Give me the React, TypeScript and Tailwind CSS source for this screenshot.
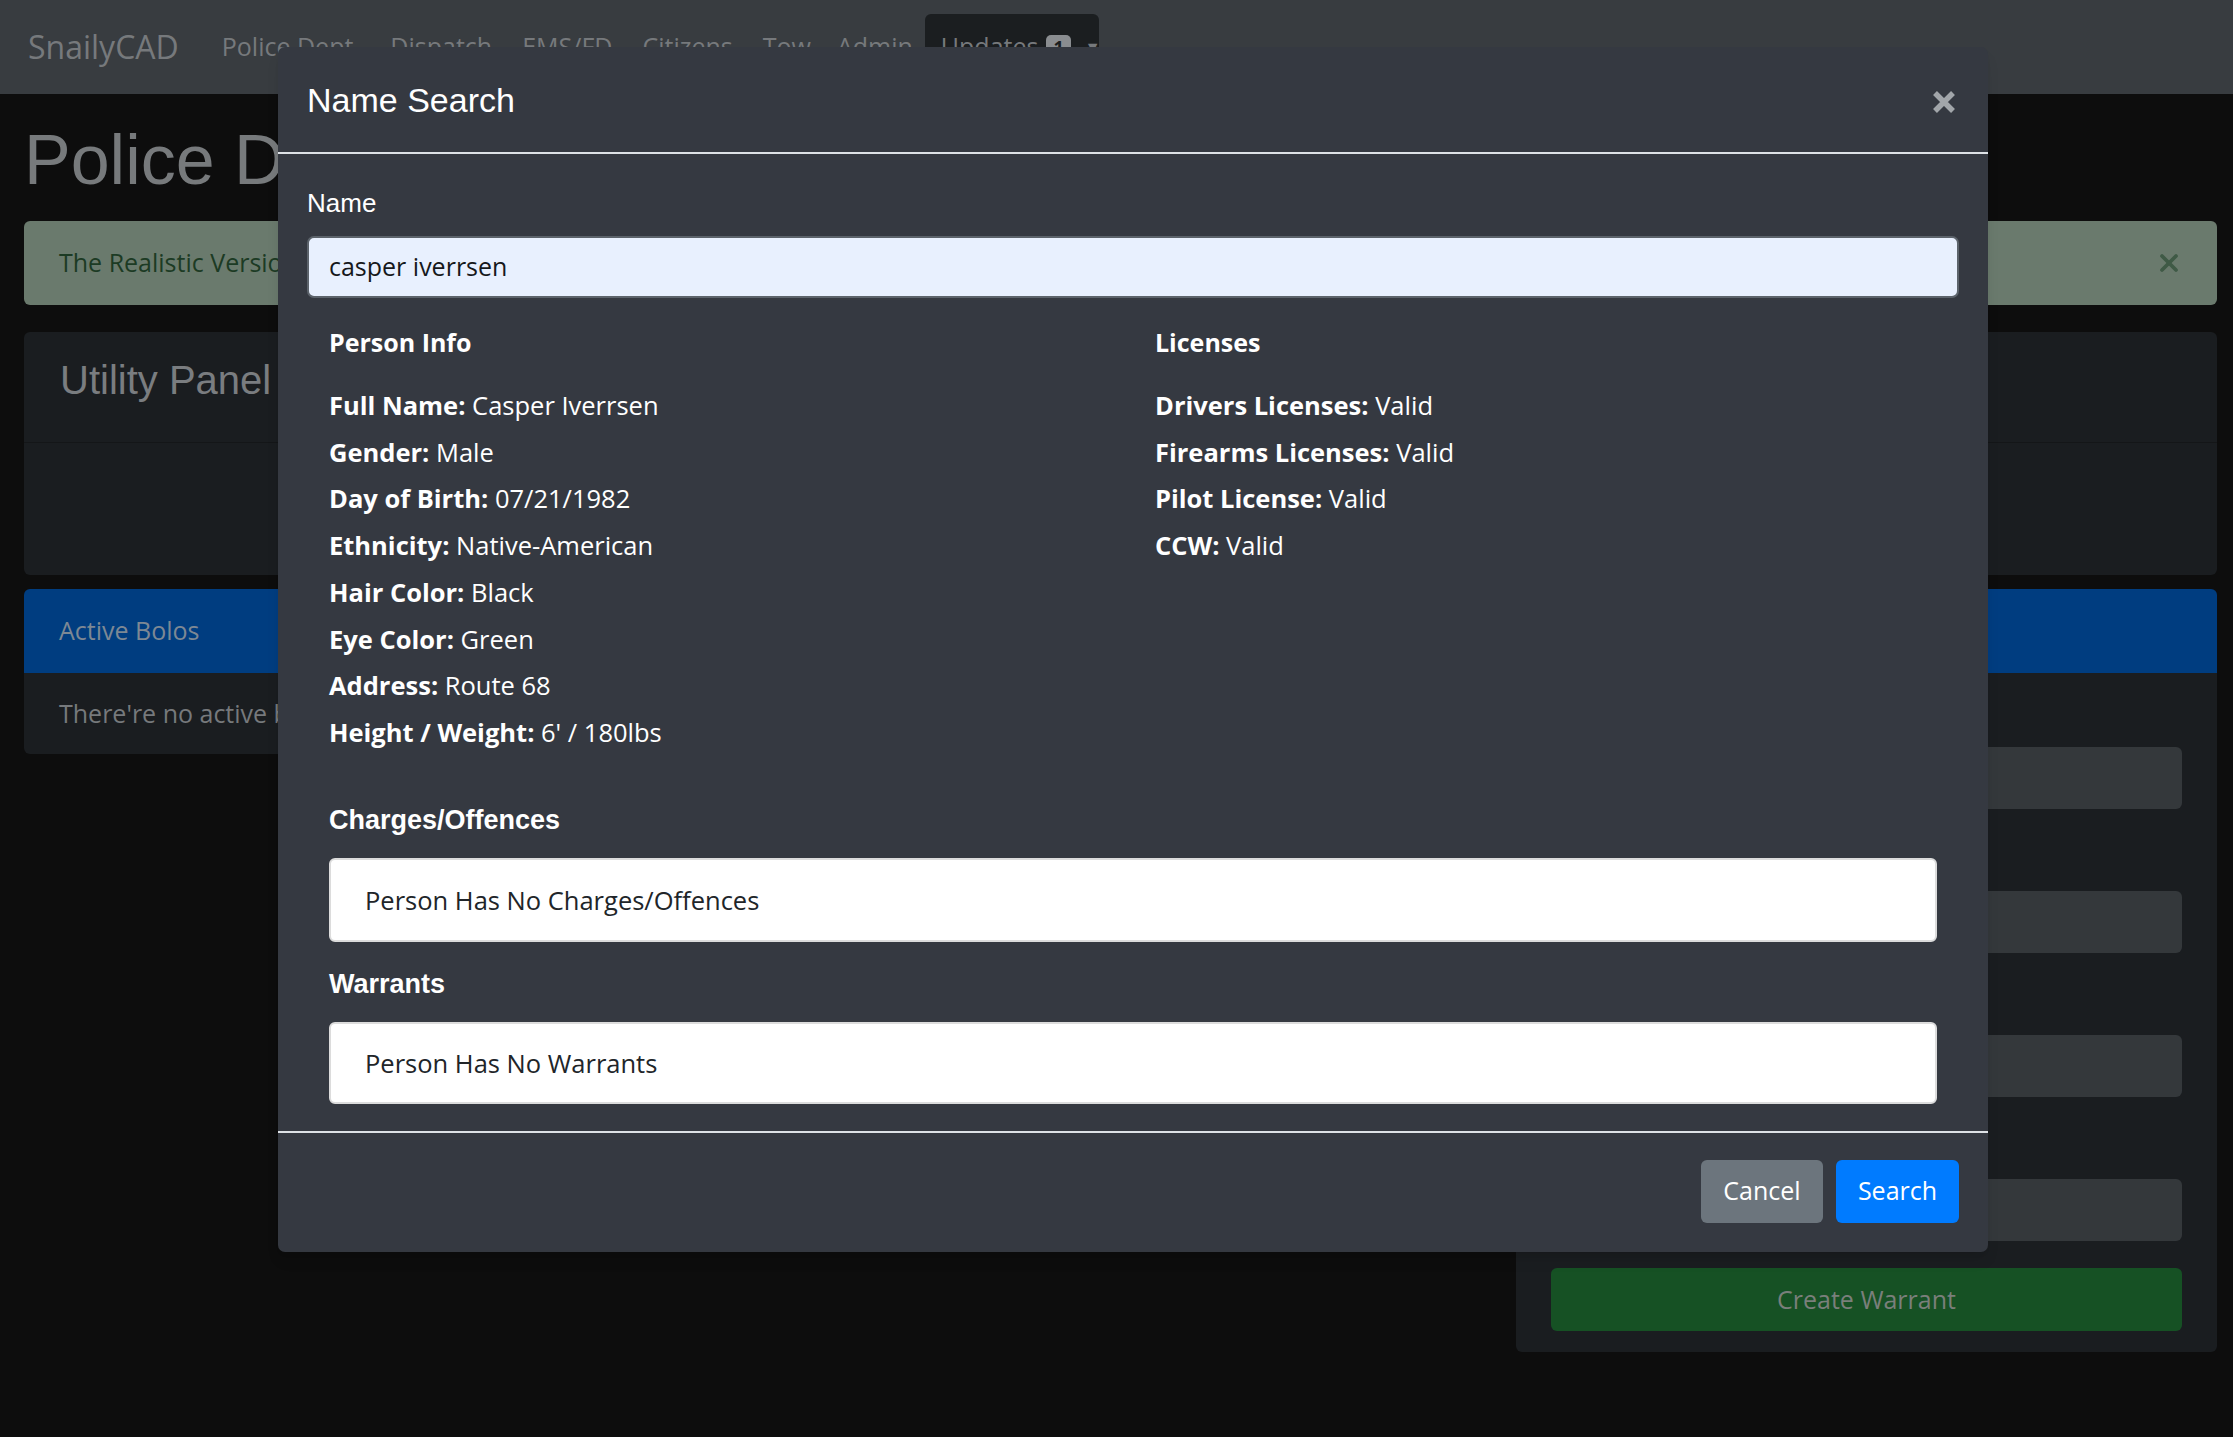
import { X } from "lucide-react";

const personInfo: [string, string][] = [
  ["Full Name", "Casper Iverrsen"],
  ["Gender", "Male"],
  ["Day of Birth", "07/21/1982"],
  ["Ethnicity", "Native-American"],
  ["Hair Color", "Black"],
  ["Eye Color", "Green"],
  ["Address", "Route 68"],
  ["Height / Weight", "6' / 180lbs"],
];

const licenses: [string, string][] = [
  ["Drivers Licenses", "Valid"],
  ["Firearms Licenses", "Valid"],
  ["Pilot License", "Valid"],
  ["CCW", "Valid"],
];

function InfoRow({ label, value }: { label: string; value: string }) {
  return (
    <p className="leading-[46.7px] text-[25.5px] text-white">
      <strong className="font-bold">{label}:</strong> {value}
    </p>
  );
}

export default function App() {
  return (
    <div className="relative min-h-screen bg-[#0d0d0d] font-['Open_Sans','Noto_Sans',sans-serif] overflow-hidden">
      {/* Navbar (dimmed by backdrop) */}
      <nav className="h-[94px] bg-[#383c40] flex items-center pl-[28px] text-[#76797c]">
        <span className="text-[32px] mr-[43px]">SnailyCAD</span>
        <div className="flex items-center gap-[30px] text-[25px]">
          <span className="mr-[7px]">Police Dept</span>
          <span>Dispatch</span>
          <span>EMS/FD</span>
          <span>Citizens</span>
          <span className="mr-[-4px]">Tow</span>
          <span>Admin</span>
        </div>
        <div className="ml-[12px] self-stretch mt-[14px] w-[174px] rounded-t-[6px] bg-[#1b1e20] flex items-center pl-[16px] pb-[14px] gap-[8px] text-[25px]">
          <span>Updates</span>
          <span className="bg-[#8a8d90] text-[#1b1e20] text-[18px] font-bold rounded-[5px] px-[7px] leading-[24px]">1</span>
          <span className="text-[16px] ml-[6px]">▼</span>
        </div>
      </nav>

      {/* Page body */}
      <main className="pl-[24px] pr-[16px] pb-[60px]">
        <h1 className="mt-[24px] mb-[19px] font-['Liberation_Sans',Arial,sans-serif] text-[70px] leading-[84px] text-[#777a7c]">
          Police Department
        </h1>

        <div className="h-[84px] rounded-[6px] bg-[#6a7a6d] flex items-center justify-between pl-[35px] pr-[34px]">
          <span className="text-[25px] text-[#1c3b24]">The Realistic Version of a CAD.</span>
          <X className="w-[28px] h-[28px] text-[#3f5a46]" strokeWidth={3.2} />
        </div>

        <div className="mt-[27px] rounded-[6px] bg-[#1a1d20]">
          <div className="h-[111px] flex items-center pl-[36px] pb-[14px] border-b border-[#141618]">
            <h2 className="font-['Liberation_Sans',Arial,sans-serif] text-[40px] text-[#7a7d80]">Utility Panel</h2>
          </div>
          <div className="h-[132px]" />
        </div>

        <div className="mt-[14px]">
          <div className="h-[84px] rounded-t-[6px] bg-[#003d80] flex items-center pl-[35px]">
            <span className="text-[25px] text-[#7d8894]">Active Bolos</span>
          </div>
          <div className="flex items-start">
            <div className="flex-1 h-[81px] bg-[#1a1d20] rounded-bl-[6px] flex items-center pl-[35px]">
              <span className="text-[25px] text-[#76797c]">There're no active bolos</span>
            </div>
            <div className="w-[701px] bg-[#1a1d20] rounded-b-[6px] pt-[74px] px-[35px] pb-[21px] flex flex-col">
              <div className="flex flex-col gap-[82px]">
                <div className="h-[62px] rounded-[6px] bg-[#34383b]" />
                <div className="h-[62px] rounded-[6px] bg-[#34383b]" />
                <div className="h-[62px] rounded-[6px] bg-[#34383b]" />
                <div className="h-[62px] rounded-[6px] bg-[#34383b]" />
              </div>
              <button className="mt-[27px] h-[63px] rounded-[6px] bg-[#165124] text-[25px] text-[#7a7f7b]">
                Create Warrant
              </button>
            </div>
          </div>
        </div>
      </main>

      {/* Name Search modal */}
      <div className="absolute top-[47px] left-[278px] w-[1710px] rounded-[7px] bg-[#353941] shadow-lg">
        <div className="h-[107px] flex items-center justify-between pl-[29px] pr-[33px] border-b-2 border-[#dee2e6]">
          <h5 className="mt-[2px] font-['Liberation_Sans',Arial,sans-serif] text-[34px] text-white">Name Search</h5>
          <svg width="22" height="22" viewBox="0 0 22 22" className="mt-[4px]">
            <path d="M2 2 L20 20 M20 2 L2 20" stroke="#a2a6aa" strokeWidth="5.5" />
          </svg>
        </div>

        <div className="px-[29px] pt-[31px] pb-[27px]">
          <label className="block font-['Liberation_Sans',Arial,sans-serif] text-[26px] leading-[36px] text-white mb-[15px]">
            Name
          </label>
          <div className="h-[62px] rounded-[7px] border-2 border-[#5c636b] bg-[#e8f0fe] flex items-center pl-[20px] text-[25px] text-[#16181b]">
            casper iverrsen
          </div>

          <div className="grid grid-cols-2 mt-[26px]">
            <div className="px-[22px]">
              <h5 className="text-[25px] font-bold leading-[36px] text-white mb-[22px]">Person Info</h5>
              {personInfo.map(([l, v]) => (
                <InfoRow key={l} label={l} value={v} />
              ))}
            </div>
            <div className="px-[22px]">
              <h5 className="text-[25px] font-bold leading-[36px] text-white mb-[22px]">Licenses</h5>
              {licenses.map(([l, v]) => (
                <InfoRow key={l} label={l} value={v} />
              ))}
            </div>
          </div>

          <div className="px-[22px] mt-[46px]">
            <h5 className="font-['Liberation_Sans',Arial,sans-serif] font-bold text-[27px] leading-[36px] text-white mb-[20px]">
              Charges/Offences
            </h5>
            <div className="h-[84px] rounded-[6px] border-2 border-[#dcdcdc] bg-white flex items-center pl-[34px] text-[25.5px] text-[#212529]">
              Person Has No Charges/Offences
            </div>
            <h5 className="mt-[24px] font-['Liberation_Sans',Arial,sans-serif] font-bold text-[27px] leading-[36px] text-white mb-[20px]">
              Warrants
            </h5>
            <div className="h-[82px] rounded-[6px] border-2 border-[#dcdcdc] bg-white flex items-center pl-[34px] text-[25.5px] text-[#212529]">
              Person Has No Warrants
            </div>
          </div>
        </div>

        <div className="border-t-2 border-[#dee2e6] flex justify-end gap-[13px] pt-[27px] pb-[29px] pr-[29px]">
          <button className="h-[63px] w-[122px] rounded-[6px] bg-[#6c757d] text-[25px] text-white">Cancel</button>
          <button className="h-[63px] w-[123px] rounded-[6px] bg-[#007bff] text-[25px] text-white">Search</button>
        </div>
      </div>
    </div>
  );
}
